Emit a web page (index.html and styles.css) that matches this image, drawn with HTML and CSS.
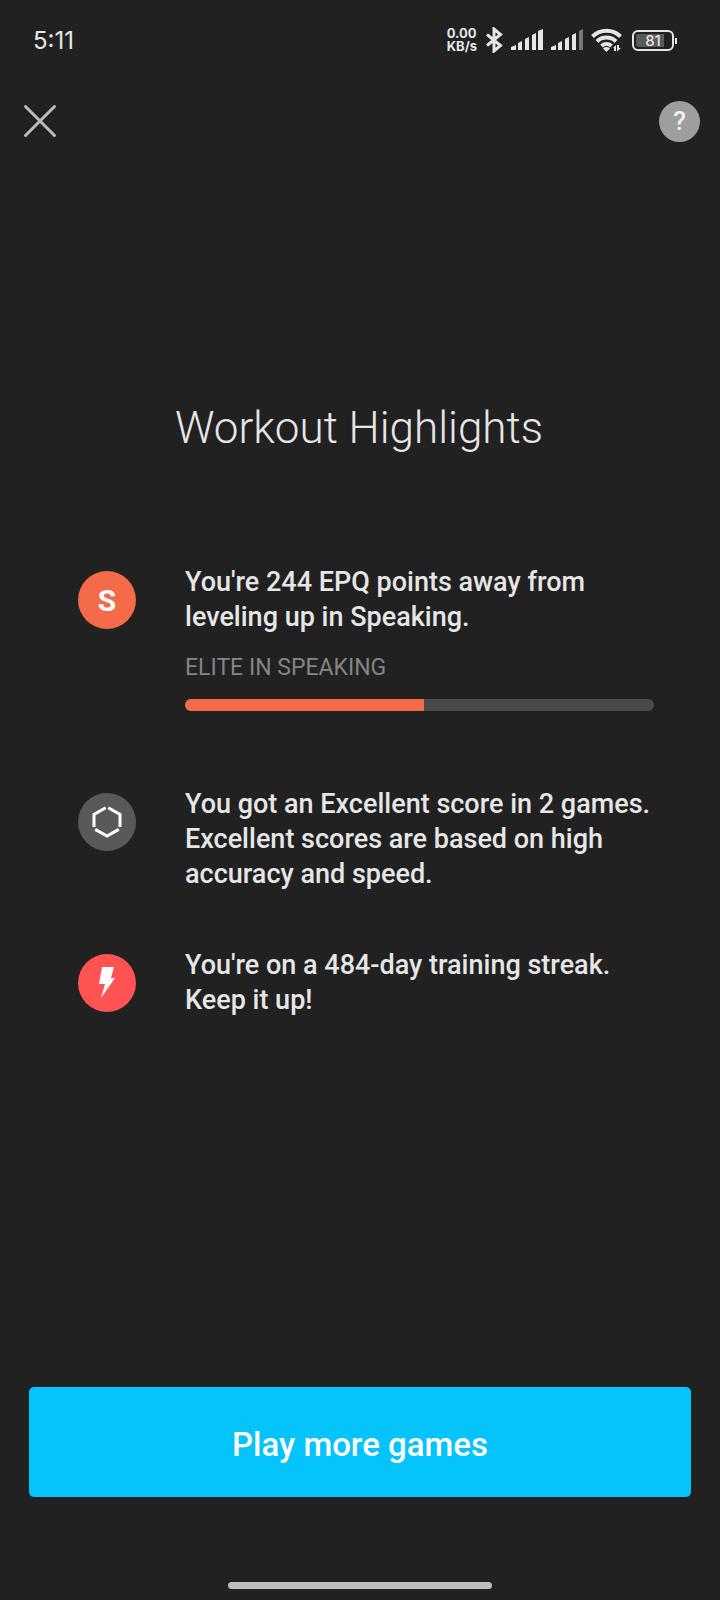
FILE: index.html
```html
<!DOCTYPE html>
<html lang="en">
<head>
<meta charset="utf-8">
<meta name="viewport" content="width=device-width, initial-scale=1">
<title>Workout Highlights</title>
<link rel="stylesheet" href="styles.css">
</head>
<body>
<div class="screen">
  <div class="status">
    <span class="clock">5:11</span>
    <div class="indicators">
      <span class="rate"><span>0.00</span><span>KB/s</span></span>
      <svg class="bluetooth" width="18" height="26" viewBox="0 0 18 26" aria-hidden="true"><path d="M2 7.500 15.500 18.500 9 24V2l6.500 5.500L2 18.500"/></svg>
      <svg class="signal" width="32" height="22" viewBox="0 0 32 22" aria-hidden="true">
        <path d="M0 21v-3l5-2v5zM7 21v-7l4-2v9zM14 21V10l4-2v13zM21 21V6l4-2v17zM27 21V2l5-2v21z"/>
      </svg>
      <svg class="signal" width="32" height="22" viewBox="0 0 32 22" aria-hidden="true">
        <path d="M0 21v-3l5-2v5zM7 21v-7l4-2v9zM14 21V10l4-2v13zM21 21V6l4-2v17z"/><path class="off" d="M28 21V2l4-2v21z"/>
      </svg>
      <svg class="wifi" width="32" height="24" viewBox="0 0 32 24" aria-hidden="true">
        <path class="arc" d="M1.500 8.500a20 20 0 0 1 28 0M6 13.500a13.500 13.500 0 0 1 19 0M10.500 18a7.500 7.500 0 0 1 10 0"/>
        <path d="M12 20.500a5 5 0 0 1 7 0L15.500 24zM22 20l3-3v6h-2v-3zM26 17h2v3h2l-4 3.500z"/>
      </svg>
      <span class="battery"><span class="level">81</span></span>
    </div>
  </div>

  <header class="topbar">
    <button class="close" type="button" aria-label="Close">
      <svg width="34" height="34" viewBox="0 0 34 34" aria-hidden="true"><path d="M2.500 2.500l29 29M31.500 2.500l-29 29"/></svg>
    </button>
    <button class="help" type="button" aria-label="Help">?</button>
  </header>

  <main class="content">
    <h1 class="title">Workout Highlights</h1>
    <ul class="highlights">
      <li class="highlight skill">
        <span class="badge orange">S</span>
        <div class="detail">
          <p class="text">You're 244 EPQ points away from leveling up in Speaking.</p>
          <p class="rank">ELITE IN SPEAKING</p>
          <div class="track"><div class="fill" style="width: 51%"></div></div>
        </div>
      </li>
      <li class="highlight">
        <span class="badge gray">
          <svg width="32" height="34" viewBox="0 0 32 34" aria-hidden="true"><path class="hex" d="M14.700 2.700 3 9.400V22M17.300 2.700 29 9.400V22M4.200 24.400 16 31l11.800-6.600"/></svg>
        </span>
        <p class="text">You got an Excellent score in 2 games. Excellent scores are based on high accuracy and speed.</p>
      </li>
      <li class="highlight">
        <span class="badge red">
          <svg width="18" height="32" viewBox="0 0 18 32" aria-hidden="true"><path class="bolt" d="M4 0h12l-3 11h4L3 31l4-14H1z"/></svg>
        </span>
        <p class="text">You're on a 484-day training streak. Keep it up!</p>
      </li>
    </ul>
  </main>

  <footer class="footer">
    <button class="play" type="button">Play more games</button>
    <div class="home"></div>
  </footer>
</div>
</body>
</html>
```

FILE: styles.css
```css
* { box-sizing: border-box; }

body {
  margin: 0;
  background: #212121;
  color: #e6e6e6;
  font-family: Roboto, "Liberation Sans", sans-serif;
}

button { border: 0; padding: 0; font-family: inherit; cursor: pointer; }

.screen { display: flex; flex-direction: column; min-height: 100vh; }

.status {
  display: flex;
  align-items: center;
  justify-content: space-between;
  height: 80px;
  padding: 0 42px 0 33px;
}
.clock { font-family: Inter, sans-serif; font-size: 24px; }
.indicators { display: flex; align-items: center; gap: 8px; }
.rate {
  display: flex;
  flex-direction: column;
  font: 700 13px/13px Inter, sans-serif;
}
.bluetooth { fill: none; stroke: #e6e6e6; stroke-width: 3; }
.signal, .wifi { fill: #e6e6e6; }
.off { fill: #777; }
.wifi .arc { fill: none; stroke: #e6e6e6; stroke-width: 4; }
.battery {
  position: relative;
  width: 42px;
  height: 21px;
  margin: 0 4px 0 1px;
  padding: 2px;
  border: 2px solid #e6e6e6;
  border-radius: 6px;
}
.battery::after {
  content: "";
  position: absolute;
  top: 6px;
  right: -5px;
  width: 2px;
  height: 6px;
  background: #e6e6e6;
}
.level {
  display: block;
  border-radius: 3px;
  background: linear-gradient(90deg, #5a5a5a 81%, transparent 81%);
  font: 500 15px/13px Inter, sans-serif;
  text-align: center;
}

.topbar {
  display: flex;
  align-items: center;
  justify-content: space-between;
  height: 82px;
  padding: 0 20px 0 23px;
}
.close { display: flex; background: none; }
.close path { stroke: #bdbdbd; stroke-width: 3; stroke-linecap: round; }
.help {
  width: 41px;
  height: 41px;
  border-radius: 50%;
  background: #9e9e9e;
  color: #f0f0f0;
  font-size: 26px;
  font-weight: 500;
}

.content { flex: 1; padding: 238px 64px 64px 78px; }
.title {
  margin: 0 0 109px;
  padding-right: 16px;
  font-size: 44px;
  font-weight: 300;
  line-height: 56px;
  text-align: center;
}
.highlights {
  display: flex;
  flex-direction: column;
  gap: 56px;
  margin: 0;
  padding: 0;
  list-style: none;
}
.highlight { display: flex; gap: 49px; }
.skill { padding-bottom: 20px; }
.badge {
  display: flex;
  flex: none;
  align-items: center;
  justify-content: center;
  width: 58px;
  height: 58px;
  margin-top: 6px;
  border-radius: 50%;
  color: #fff;
  font-size: 30px;
  font-weight: 700;
}
.orange { background: #f46b4a; }
.gray { background: #595959; }
.red { background: #ff5252; }
.hex { fill: none; stroke: #fff; stroke-width: 3; }
.bolt { fill: #fff; }
.detail { flex: 1; }
.text { margin: 0; font-size: 27px; font-weight: 500; line-height: 35px; }
.rank { margin: 18px 0 16px; color: #858585; font-size: 23px; line-height: 30px; }
.track {
  height: 12px;
  margin-right: 2px;
  overflow: hidden;
  border-radius: 6px;
  background: #4a4a4a;
}
.fill { height: 100%; background: #f46b4a; }

.footer {
  display: flex;
  flex-direction: column;
  align-items: center;
  gap: 85px;
  padding: 0 29px 11px;
}
.play {
  width: 100%;
  height: 110px;
  padding-top: 4px;
  border-radius: 5px;
  background: #05c3fb;
  color: #fff;
  font-size: 33px;
  font-weight: 500;
}
.home { width: 40%; height: 7px; border-radius: 4px; background: #bdbdbd; }
```
